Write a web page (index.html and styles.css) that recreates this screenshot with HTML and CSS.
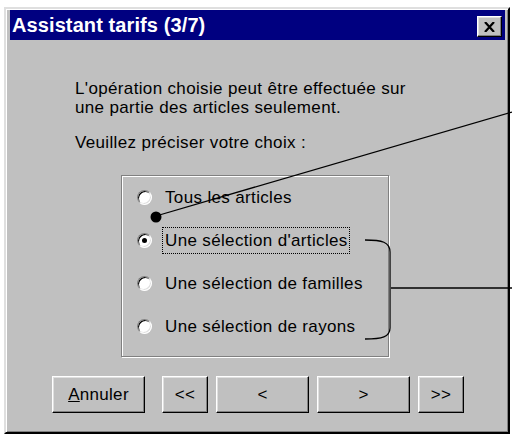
FILE: index.html
```html
<!DOCTYPE html>
<html lang="fr">
<head>
  <meta charset="UTF-8">
  <title>Assistant tarifs</title>
  <link rel="stylesheet" href="styles.css">
</head>
<body>

<div class="window">
  <div class="titlebar">
    <span class="title">Assistant tarifs (3/7)</span>
    <button class="close">
      <svg width="11" height="10" viewBox="0 0 11 10">
        <path d="M1 0 L10 10 M10 0 L1 10" stroke="#000" stroke-width="2.2" fill="none"/>
      </svg>
    </button>
  </div>

  <div class="content">
    <p class="intro">L'opération choisie peut être effectuée sur<br>une partie des articles seulement.</p>
    <p class="prompt">Veuillez préciser votre choix :</p>

    <div class="group">
      <div class="option"><span class="radio"></span><span class="label">Tous les articles</span></div>
      <div class="option"><span class="radio checked"></span><span class="label focus">Une sélection d'articles</span></div>
      <div class="option"><span class="radio"></span><span class="label">Une sélection de familles</span></div>
      <div class="option"><span class="radio"></span><span class="label">Une sélection de rayons</span></div>
    </div>

    <div class="buttons">
      <button class="btn wide"><u>A</u>nnuler</button>
      <button class="btn small first">&lt;&lt;</button>
      <button class="btn wide">&lt;</button>
      <button class="btn wide">&gt;</button>
      <button class="btn small">&gt;&gt;</button>
    </div>
  </div>
</div>

<svg class="callouts" width="512" height="434" viewBox="0 0 512 434">
  <line x1="156" y1="216" x2="512" y2="112" stroke="#000" stroke-width="1.3"/>
  <circle cx="156" cy="217" r="5.5" fill="#000"/>
  <path d="M365 240 C382 240 390 242 390 252 L390 328 C390 337 382 339 365 339" stroke="#000" stroke-width="1.3" fill="none"/>
  <line x1="391" y1="288" x2="512" y2="288" stroke="#000" stroke-width="1.3"/>
</svg>

</body>
</html>
```

FILE: styles.css
```css
* { box-sizing: border-box; }

body {
  margin: 0;
  background: #fff;
  font-family: 'Liberation Sans', Arial, sans-serif;
  position: relative;
  width: 512px;
  height: 434px;
  overflow: hidden;
}

.window {
  margin: 7px 0 0 4px;
  width: 506px;
  height: 427px;
  background: #c0c0c0;
  border: 2px solid;
  border-color: #dfdfdf #000 #000 #dfdfdf;
  box-shadow: inset 1px 1px 0 #fff, inset -1px -1px 0 #808080;
  padding: 1px 3px 3px 4px;
}

.titlebar {
  height: 30px;
  background: #000080;
  display: flex;
  align-items: center;
  justify-content: space-between;
  padding: 0 3px 0 2px;
}

.title {
  color: #fff;
  font-weight: bold;
  font-size: 20px;
  letter-spacing: 0.1px;
}

.close {
  width: 25px;
  height: 21px;
  padding: 0;
  margin-top: 3px;
  background: #c0c0c0;
  border: 1px solid;
  border-color: #fff #000 #000 #fff;
  box-shadow: inset -1px -1px 0 #808080, inset 1px 1px 0 #dfdfdf;
  display: flex;
  align-items: center;
  justify-content: center;
}

.content {
  padding-left: 65px;
  color: #000;
  font-size: 17px;
  letter-spacing: 0.35px;
}

.intro {
  margin: 39px 0 0;
  line-height: 19px;
}

.prompt {
  margin: 16px 0 0;
  line-height: 19px;
}

.group {
  margin: 23px 0 0 46px;
  width: 268px;
  height: 182px;
  border: 1px solid #808080;
  box-shadow: 1px 1px 0 #fff, inset 1px 1px 0 #fff;
  padding: 0 0 0 15px;
}

.option {
  height: 43px;
  display: flex;
  align-items: center;
}

.radio {
  width: 15px;
  height: 15px;
  border-radius: 50%;
  background: #fff;
  border: 1px solid;
  border-color: #808080 #fff #fff #808080;
  box-shadow: inset 1px 1px 0 #000, inset -1px -1px 0 #dfdfdf;
  display: flex;
  align-items: center;
  justify-content: center;
  flex-shrink: 0;
}

.radio.checked::after {
  content: '';
  width: 5px;
  height: 5px;
  border-radius: 50%;
  background: #000;
}

.label {
  margin-left: 10px;
  padding: 3px 1px 3px 2px;
  line-height: 19px;
  border: 1px dotted transparent;
}

.label.focus {
  border-color: #000;
}

.buttons {
  display: flex;
  margin: 19px 0 0 -23px;
}

.btn {
  height: 37px;
  font-family: 'Liberation Sans', Arial, sans-serif;
  font-size: 17px;
  letter-spacing: 0.3px;
  color: #000;
  background: #c0c0c0;
  border: 1px solid;
  border-color: #fff #000 #000 #fff;
  box-shadow: inset -1px -1px 0 #808080, inset 1px 1px 0 #dfdfdf;
  padding: 0;
  margin-right: 8px;
}

.btn.wide { width: 93px; }
.btn.small { width: 46px; }
.btn.first { margin-left: 9px; }

.callouts {
  position: absolute;
  top: 0;
  left: 0;
  pointer-events: none;
}
```
